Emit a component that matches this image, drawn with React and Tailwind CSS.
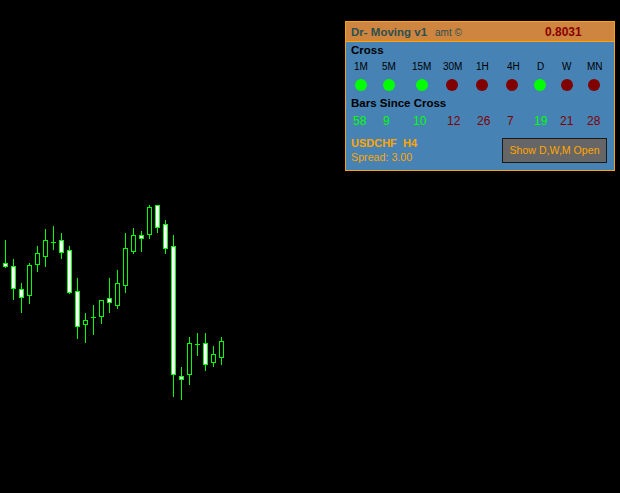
import React from "react";

const candles = [
  [5, 240, 267, 263, 266, "w"],
  [13, 259, 299, 266, 288, "w"],
  [21, 283, 312, 289, 297, "w"],
  [29, 263, 303, 265, 295, "h"],
  [37, 246, 271, 253, 264, "h"],
  [45, 229, 266, 240, 256, "h"],
  [53, 226, 249, 242, 242, "d"],
  [61, 233, 258, 240, 252, "w"],
  [69, 246, 293, 250, 292, "w"],
  [77, 278, 338, 291, 326, "w"],
  [85, 313, 342, 320, 324, "h"],
  [93, 305, 334, 317, 317, "d"],
  [101, 300, 323, 300, 316, "h"],
  [109, 278, 312, 298, 302, "w"],
  [117, 270, 308, 283, 305, "h"],
  [125, 233, 292, 248, 285, "h"],
  [133, 228, 253, 235, 251, "h"],
  [141, 231, 251, 235, 238, "w"],
  [149, 205, 238, 207, 234, "h"],
  [157, 205, 232, 205, 227, "w"],
  [165, 220, 253, 224, 248, "w"],
  [173, 235, 396, 246, 374, "w"],
  [181, 367, 399, 376, 379, "w"],
  [189, 337, 384, 343, 374, "h"],
  [197, 333, 355, 344, 344, "d"],
  [205, 333, 370, 343, 364, "w"],
  [213, 346, 366, 354, 362, "h"],
  [221, 337, 364, 341, 357, "h"],
];

const labels = ["1M", "5M", "15M", "30M", "1H", "4H", "D", "W", "MN"];
const dots = [1, 1, 1, 0, 0, 0, 1, 0, 0];
const bars = [
  ["58", 1],
  ["9", 1],
  ["10", 1],
  ["12", 0],
  ["26", 0],
  ["7", 0],
  ["19", 1],
  ["21", 0],
  ["28", 0],
];

function Chart() {
  return (
    <svg width="620" height="493" className="block" shapeRendering="crispEdges">
      {candles.map(([c, wt, wb, bt, bb, t], i) => (
        <g key={i}>
          <rect x={c} y={wt} width="1" height={wb - wt + 1} fill="#00FF00" />
          {t === "d" ? (
            <rect x={c - 2} y={bt} width="5" height="1" fill="#00FF00" />
          ) : (
            <>
              <rect x={c - 2} y={bt} width="5" height={bb - bt + 1} fill="#00FF00" />
              {bb - bt > 1 && (
                <rect
                  x={c - 1}
                  y={bt + 1}
                  width="3"
                  height={bb - bt - 1}
                  fill={t === "w" ? "#FFFFFF" : "#000000"}
                />
              )}
            </>
          )}
        </g>
      ))}
    </svg>
  );
}

export default function App() {
  return (
    <div className="relative w-[620px] h-[493px] bg-black overflow-hidden font-['Liberation_Sans',Arial,sans-serif]">
      <Chart />
      <div className="absolute left-[345px] top-[21px] w-[270px] h-[150px] border border-[#FFA500] bg-[#4682B4]">
        <div className="h-[20px] bg-[#CD853F] border-b border-[#FFA500] pt-[1px] pl-[5px] flex items-baseline leading-[19px] whitespace-nowrap">
          <span className="w-[84px] text-[11.5px] font-bold text-[#2F4F4F]">Dr- Moving v1</span>
          <span className="w-[110px] text-[10px] text-[#2F4F4F]">amt ©</span>
          <span className="text-[12px] font-bold text-[#8B0000]">0.8031</span>
        </div>
        <div className="pt-[1px]">
          <div className="pl-[5px] text-[11.5px] font-bold leading-[14px] text-black">Cross</div>
          <div className="mt-[3px] pl-[8px] grid grid-cols-[28px_30px_31px_33px_31px_30px_25px_25px_30px] text-[10px] leading-[13px] text-black">
            {labels.map((l) => (
              <span key={l}>{l}</span>
            ))}
          </div>
          <div className="mt-[6px] pl-[9px] grid grid-cols-[28px_33px_30px_30px_30px_28px_27px_27px_12px]">
            {dots.map((d, i) => (
              <span
                key={i}
                className={d ? "block w-[12px] h-[12px] rounded-full bg-[#00FF00]" : "block w-[12px] h-[12px] rounded-full bg-[#800000]"}
              />
            ))}
          </div>
          <div className="mt-[5px] pl-[5px] text-[11.5px] font-bold leading-[14px] text-black">Bars Since Cross</div>
          <div className="mt-[4px] pl-[7px] grid grid-cols-[30px_30px_34px_30px_30px_27px_26px_27px_28px] text-[12px] leading-[14px]">
            {bars.map(([n, g], i) => (
              <span key={i} className={g ? "text-[#00FF00]" : "text-[#800000]"}>
                {n}
              </span>
            ))}
          </div>
          <div className="mt-[9px] flex">
            <div className="pl-[5px] text-[#FFA500]">
              <div className="text-[11px] font-bold leading-[13px] whitespace-pre">USDCHF  H4</div>
              <div className="text-[10.7px] leading-[14px]">Spread: 3.00</div>
            </div>
            <div className="ml-auto mr-[7px] mt-[1px] w-[105px] h-[25px] bg-[#666666] border border-[#1a1a1a] flex items-center justify-center text-[10.6px] text-[#FFA500] whitespace-nowrap">
              Show D,W,M Open
            </div>
          </div>
        </div>
      </div>
    </div>
  );
}
